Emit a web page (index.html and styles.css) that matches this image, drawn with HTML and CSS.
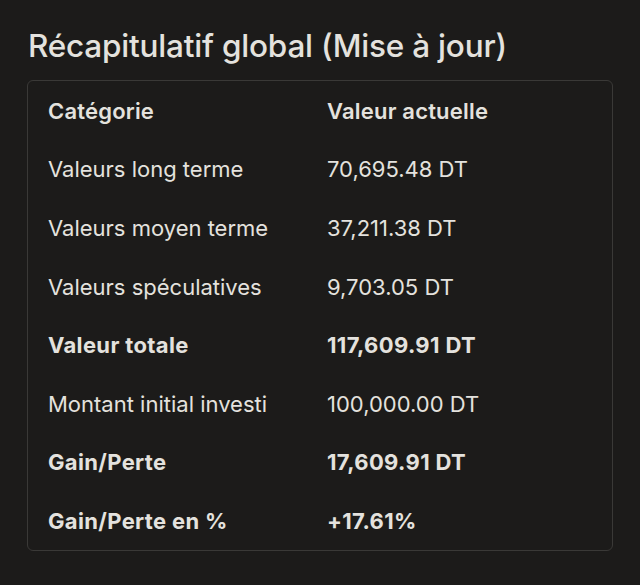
FILE: index.html
```html
<!DOCTYPE html>
<html lang="fr">
<head>
<meta charset="utf-8">
<link rel="stylesheet" href="styles.css">
</head>
<body>
<main class="page">
  <h1 class="title">Récapitulatif global (Mise à jour)</h1>
  <div class="card">
    <div class="row head"><span>Catégorie</span><span>Valeur actuelle</span></div>
    <div class="row"><span>Valeurs long terme</span><span>70,695.48 DT</span></div>
    <div class="row"><span>Valeurs moyen terme</span><span>37,211.38 DT</span></div>
    <div class="row"><span>Valeurs spéculatives</span><span>9,703.05 DT</span></div>
    <div class="row strong"><span>Valeur totale</span><span>117,609.91 DT</span></div>
    <div class="row"><span>Montant initial investi</span><span>100,000.00 DT</span></div>
    <div class="row strong"><span>Gain/Perte</span><span>17,609.91 DT</span></div>
    <div class="row strong"><span>Gain/Perte en %</span><span>+17.61%</span></div>
  </div>
</main>
</body>
</html>
```
FILE: styles.css
```css
html, body {
  margin: 0;
  padding: 0;
  background: #1c1b1a;
}
body {
  font-family: Inter, "Noto Sans", sans-serif;
  color: #e4e2de;
}
.page {
  padding: 26px 27px 0 27px;
}
.title {
  margin: 0 0 0 1px;
  font-size: 31.5px;
  font-weight: 500;
  line-height: 40px;
  letter-spacing: -0.2px;
}
.card {
  margin-top: 14px;
  border: 1.5px solid #3a3937;
  border-radius: 6px;
  padding: 0 20px;
}
.row {
  display: grid;
  grid-template-columns: 279px 1fr;
  height: 58.6px;
  align-items: center;
  font-size: 22px;
  font-weight: 400;
  padding-top: 1px;
  box-sizing: border-box;
}
.row.head {
  font-weight: 600;
  letter-spacing: 0.2px;
}
.row.strong {
  font-weight: 650;
  letter-spacing: 0.35px;
}
```
